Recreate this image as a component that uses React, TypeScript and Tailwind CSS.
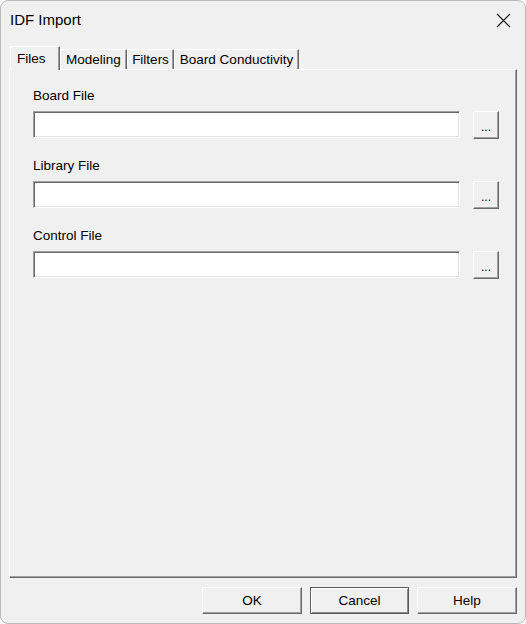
import React from "react";

const font = "font-['Liberation_Sans',Arial,sans-serif]";

const raised =
  "border border-t-white border-l-white border-r-[#696969] border-b-[#696969] shadow-[inset_-1px_-1px_0_#a0a0a0]";

function FileRow({ label }: { label: string }): React.ReactElement {
  return (
    <div className="flex flex-col">
      <div className="h-[16px] pt-px text-[13.5px] leading-[16px] text-[#000]">{label}</div>
      <div className="mt-[8px] flex items-start gap-[13px]">
        <div className="h-[27px] w-[427px] border border-t-[#a0a0a0] border-l-[#a0a0a0] border-r-white border-b-white bg-white shadow-[inset_1px_1px_0_#696969,inset_-1px_-1px_0_#e3e3e3]" />
        <button
          type="button"
          className={`flex h-[28px] w-[26px] items-center justify-center bg-[#f0f0f0] pt-[3px] text-[12px] leading-none ${raised}`}
        >
          ...
        </button>
      </div>
    </div>
  );
}

export default function App(): React.ReactElement {
  const tabs = [
    { name: "Modeling", w: "w-[67px]" },
    { name: "Filters", w: "w-[47px]" },
    { name: "Board Conductivity", w: "w-[125px]" },
  ];

  return (
    <div className="h-[624px] w-[526px] bg-white">
      <div
        className={`flex h-[624px] w-[526px] flex-col overflow-hidden rounded-[8px] border border-[#b9b9b9] bg-[#f0f0f0] text-[#000] ${font}`}
      >
        {/* title bar */}
        <div className="flex h-[38px] items-center justify-between pl-[9px] pr-[14px]">
          <span className="text-[15px]">IDF Import</span>
          <svg width="15" height="15" viewBox="0 0 15 15" fill="none">
            <path d="M1 1 L14 14 M14 1 L1 14" stroke="#1a1a1a" strokeWidth="1.2" />
          </svg>
        </div>

        {/* tabs */}
        <div className="mt-[7px] flex h-[23px] items-end pl-[9px]">
          <div className="relative z-10 -mb-px flex h-[24px] w-[50px] items-start justify-start border-l border-t border-r border-l-white border-t-white border-r-[#696969] bg-[#f0f0f0] pl-[6px] pt-[2px] text-[13.5px] shadow-[inset_-1px_0_0_#a0a0a0]">
            Files
          </div>
          {tabs.map((t) => (
            <div
              key={t.name}
              className={`flex h-[20px] ${t.w} items-center justify-center border-l border-t border-r border-l-white border-t-white border-r-[#696969] pt-[1px] text-[13.5px] shadow-[inset_-1px_0_0_#a0a0a0]`}
            >
              {t.name}
            </div>
          ))}
        </div>

        {/* panel */}
        <div className="ml-[8px] flex h-[509px] w-[508px] flex-col gap-[18px] border border-t-white border-l-white border-r-[#696969] border-b-[#696969] pl-[23px] pt-[17px] shadow-[inset_-1px_-1px_0_#a0a0a0]">
          <FileRow label="Board File" />
          <FileRow label="Library File" />
          <FileRow label="Control File" />
        </div>

        {/* buttons */}
        <div className="mt-[9px] flex justify-end gap-[8px] pr-[8px]">
          <button type="button" className={`h-[27px] w-[100px] bg-[#f0f0f0] pt-px text-[13.5px] ${raised}`}>
            OK
          </button>
          <button
            type="button"
            className="h-[27px] w-[99px] border border-[#5a5a5a] bg-[#f0f0f0] pt-px text-[13.5px] shadow-[inset_1px_1px_0_#fff,inset_-1px_-1px_0_#8a8a8a]"
          >
            Cancel
          </button>
          <button type="button" className={`h-[27px] w-[100px] bg-[#f0f0f0] pt-px text-[13.5px] ${raised}`}>
            Help
          </button>
        </div>
      </div>
    </div>
  );
}
